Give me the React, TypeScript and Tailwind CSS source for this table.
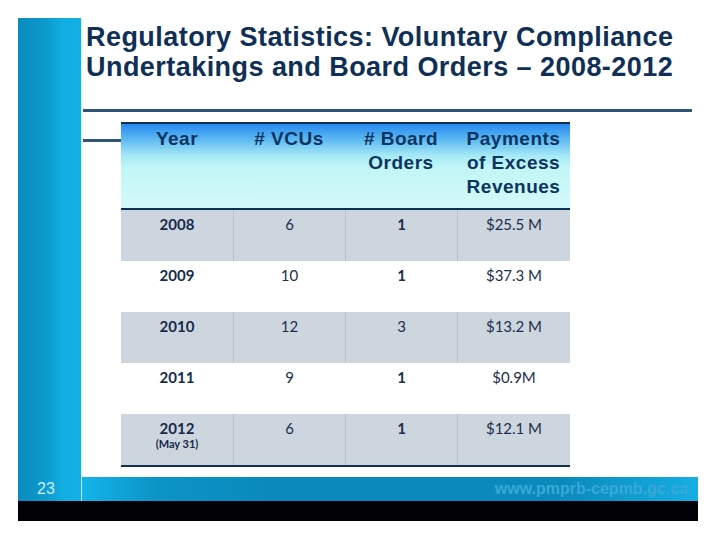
const rows = [
  { year: "2008", note: "", vcus: "6", orders: "1", pay: "$25.5 M", shaded: true },
  { year: "2009", note: "", vcus: "10", orders: "1", pay: "$37.3 M", shaded: false },
  { year: "2010", note: "", vcus: "12", orders: "3", pay: "$13.2 M", shaded: true },
  { year: "2011", note: "", vcus: "9", orders: "1", pay: "$0.9M", shaded: false },
  { year: "2012", note: "(May 31)", vcus: "6", orders: "1", pay: "$12.1 M", shaded: true },
];

const headers = [["Year"], ["# VCUs"], ["# Board", "Orders"], ["Payments", "of Excess", "Revenues"]];

const sidebarBg =
  "bg-[linear-gradient(to_right,#0a8bbd_0%,#0d9acd_45%,#12ade2_70%,#13b0e5_100%)]";

export default function App() {
  return (
    <div className="w-[720px] h-[540px] bg-white pt-[18px] pl-[18px]">
      <div className="w-[680px] flex flex-col">
        <div className="flex h-[459px]">
          <div className={`w-[64px] shrink-0 border-r border-[#d2f0fb] ${sidebarBg}`} />

          <div className="flex-1 flex flex-col">
            <h1 className="pl-[4px] pt-[4px] font-['Liberation_Sans',Arial,sans-serif] font-bold text-[27px] leading-[30px] tracking-[0.45px] text-[#0f2f57] whitespace-nowrap">
              Regulatory Statistics: Voluntary Compliance
              <br />
              Undertakings and Board Orders – 2008-2012
            </h1>

            <div className="mt-[27px] ml-[1px] w-[609px] h-[3px] bg-[#2e5577]" />

            <div className="flex mt-[10px] ml-[1px]">
              <div className="w-[38px] h-[3px] mt-[17px] bg-[#2e5577]" />

              <div className="w-[449px]">
                <div className="grid grid-cols-[112px_112px_112px_113px] border-t-2 border-b-2 border-[#0f2f55] bg-[linear-gradient(to_bottom,#2689ef_0%,#5cb8f2_18%,#a6eaf5_38%,#c2f6f6_52%,#d3f9f9_100%)]">
                  {headers.map((lines, i) => (
                    <div
                      key={i}
                      className="h-[84px] pt-[3px] text-center font-['Liberation_Sans',Arial,sans-serif] font-bold text-[19px] leading-[24px] tracking-[0.5px] text-[#0c3461]"
                    >
                      {lines.map((l) => (
                        <div key={l}>{l}</div>
                      ))}
                    </div>
                  ))}
                </div>

                <div className="border-b-2 border-[#0f2f55] font-['Lato',sans-serif] text-[15px] leading-[20px] text-[#1c2f4d]">
                  {rows.map((r) => {
                    const sep = r.shaded ? "border-[#b6c0cc]" : "border-white";
                    return (
                      <div
                        key={r.year}
                        className={`grid grid-cols-[112px_112px_112px_113px] h-[51px] ${
                          r.shaded ? "bg-[#cdd5df]" : "bg-white"
                        }`}
                      >
                        <div className="pt-[4px] text-center">
                          <div className="font-bold text-[#152b4b]">{r.year}</div>
                          {r.note && (
                            <div className="font-bold text-[11px] leading-[12px] text-[#152b4b]">
                              {r.note}
                            </div>
                          )}
                        </div>
                        <div className={`pt-[4px] text-center border-l ${sep}`}>{r.vcus}</div>
                        <div
                          className={`pt-[4px] text-center border-l ${sep} ${
                            r.orders === "1" ? "font-bold" : ""
                          }`}
                        >
                          {r.orders}
                        </div>
                        <div className={`pt-[4px] text-center border-l ${sep}`}>{r.pay}</div>
                      </div>
                    );
                  })}
                </div>
              </div>
            </div>
          </div>
        </div>

        <div className="flex h-[24px]">
          <div
            className={`w-[64px] shrink-0 border-r border-[#bfe9f8] pl-[19px] flex items-center font-['Liberation_Sans',Arial,sans-serif] text-[16px] text-[#c8eefc] ${sidebarBg}`}
          >
            23
          </div>
          <div className="flex-1 flex items-center justify-end pr-[10px] bg-[linear-gradient(to_right,#14b4ea_0%,#0c94c7_12%,#0a8abc_30%,#0a8abc_78%,#16aee3_100%)] font-['Liberation_Sans',Arial,sans-serif] font-bold text-[16px] text-[#3aa8d6]">
            www.pmprb-cepmb.gc.ca
          </div>
        </div>

        <div className="h-[20px] bg-[#020206]" />
      </div>
    </div>
  );
}
